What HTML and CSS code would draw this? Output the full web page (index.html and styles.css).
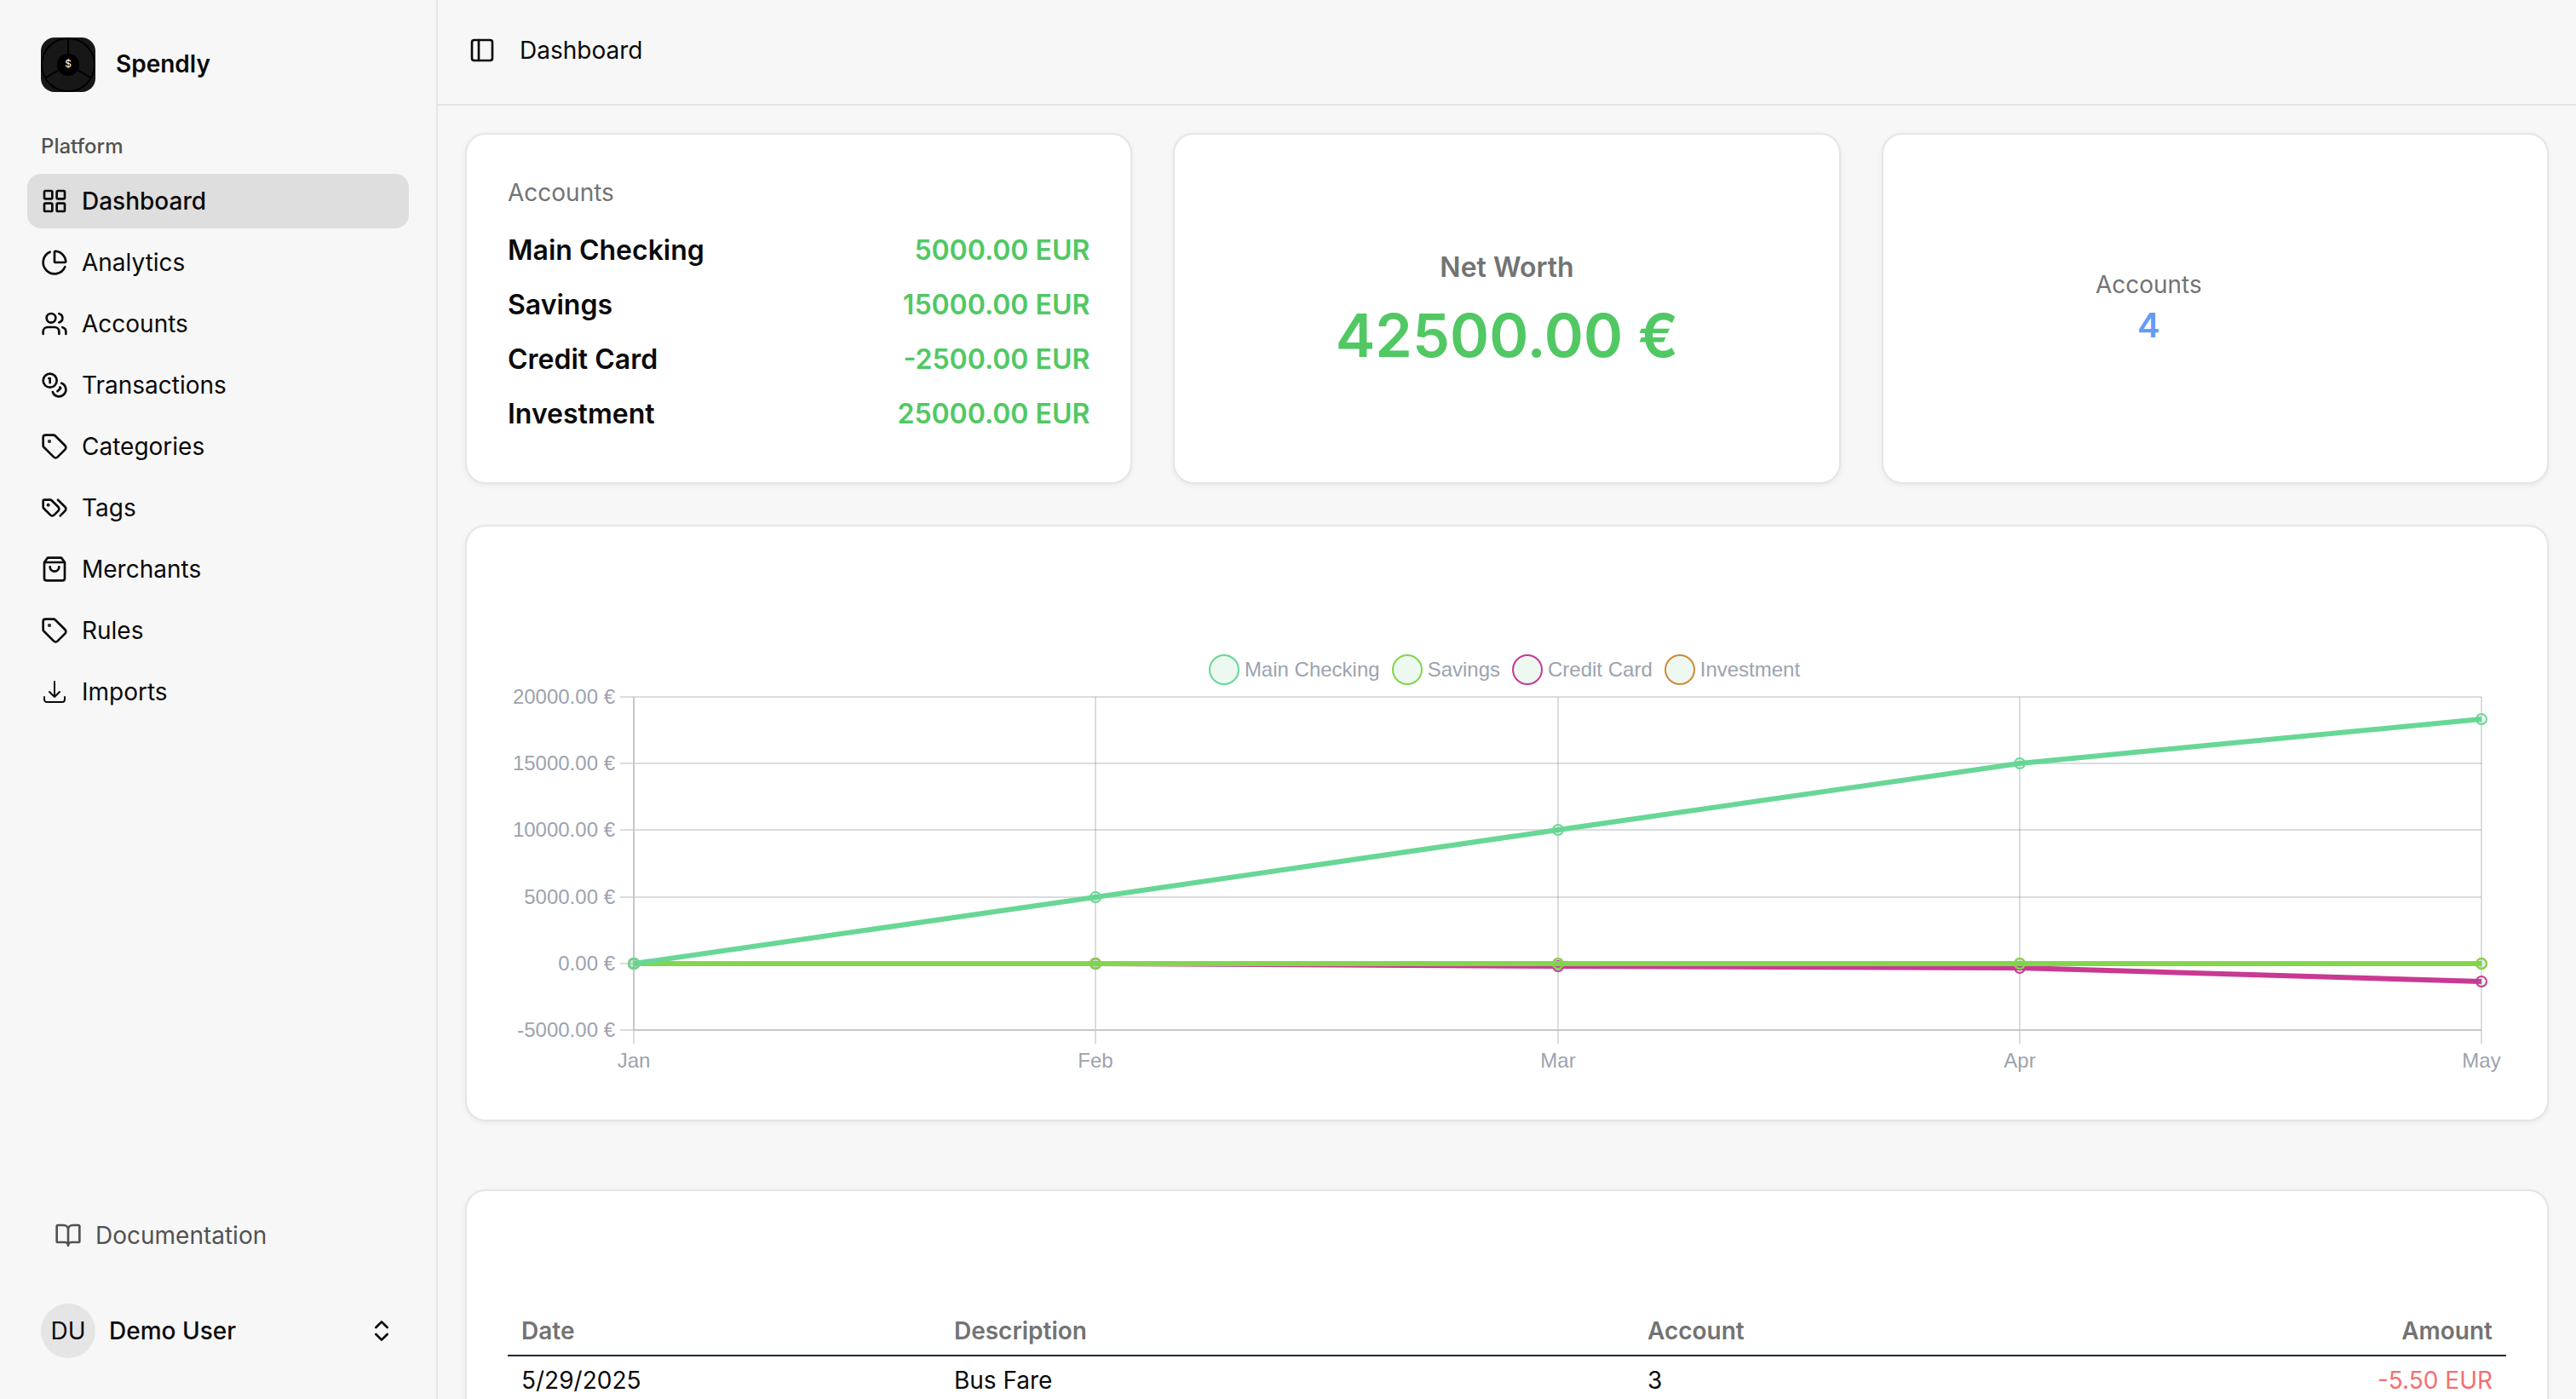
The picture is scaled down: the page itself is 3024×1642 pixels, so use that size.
FILE: index.html
```html
<!DOCTYPE html>
<html lang="en">
<head>
<meta charset="utf-8">
<title>Dashboard - Spendly</title>
<link rel="stylesheet" href="styles.css">
</head>
<body>
<div class="app">
  <aside class="sidebar">
    <a class="brand" href="#">
      <svg class="brand-logo" viewBox="0 0 64 64" aria-hidden="true">
        <rect width="64" height="64" rx="16" fill="#171717"/>
        <g fill="none" stroke="#000" stroke-width="2">
          <circle cx="32" cy="32" r="31"/>
          <path d="M32 1v20M6 47l17-10M58 47L41 37"/>
        </g>
        <circle cx="32" cy="32" r="13" fill="#000"/>
        <text x="32" y="35" text-anchor="middle" font-size="12" fill="#fff">$</text>
      </svg>
      <span class="brand-name">Spendly</span>
    </a>
    <nav class="nav" aria-label="Platform">
      <p class="nav-label">Platform</p>
      <ul class="nav-list">
        <li><a class="nav-item active" href="#" aria-current="page"><svg class="icon" viewBox="0 0 24 24"><rect width="7" height="7" x="3" y="3" rx="1"/><rect width="7" height="7" x="14" y="3" rx="1"/><rect width="7" height="7" x="14" y="14" rx="1"/><rect width="7" height="7" x="3" y="14" rx="1"/></svg>Dashboard</a></li>
        <li><a class="nav-item" href="#"><svg class="icon" viewBox="0 0 24 24"><path d="M21 12c.552 0 1.005-.449.95-.998a10 10 0 0 0-8.953-8.951c-.55-.055-.998.398-.998.95v8a1 1 0 0 0 1 1z"/><path d="M21.21 15.89A10 10 0 1 1 8 2.83"/></svg>Analytics</a></li>
        <li><a class="nav-item" href="#"><svg class="icon" viewBox="0 0 24 24"><path d="M16 21v-2a4 4 0 0 0-4-4H6a4 4 0 0 0-4 4v2"/><circle cx="9" cy="7" r="4"/><path d="M22 21v-2a4 4 0 0 0-3-3.870M16 3.130a4 4 0 0 1 0 7.750"/></svg>Accounts</a></li>
        <li><a class="nav-item" href="#"><svg class="icon" viewBox="0 0 24 24"><circle cx="8" cy="8" r="6"/><path d="M18.090 10.370A6 6 0 1 1 10.340 18M7 6h1v4M16.710 13.880l.7.710-2.820 2.820"/></svg>Transactions</a></li>
        <li><a class="nav-item" href="#"><svg class="icon" viewBox="0 0 24 24"><path d="M12.586 2.586A2 2 0 0 0 11.172 2H4a2 2 0 0 0-2 2v7.172a2 2 0 0 0 .586 1.414l8.704 8.704a2.426 2.426 0 0 0 3.420 0l6.580-6.580a2.426 2.426 0 0 0 0-3.420z"/><circle cx="7.500" cy="7.500" r=".5" fill="currentColor"/></svg>Categories</a></li>
        <li><a class="nav-item" href="#"><svg class="icon" viewBox="0 0 24 24"><path d="m15 5 6.300 6.300a2.400 2.400 0 0 1 0 3.400L17 19"/><path d="M9.586 5.586A2 2 0 0 0 8.172 5H3a1 1 0 0 0-1 1v5.172a2 2 0 0 0 .586 1.414L8.290 18.290a2.426 2.426 0 0 0 3.420 0l3.580-3.580a2.426 2.426 0 0 0 0-3.420z"/><circle cx="6.500" cy="9.500" r=".5" fill="currentColor"/></svg>Tags</a></li>
        <li><a class="nav-item" href="#"><svg class="icon" viewBox="0 0 24 24"><path d="M6 2 3 6v14a2 2 0 0 0 2 2h14a2 2 0 0 0 2-2V6l-3-4ZM3 6h18M16 10a4 4 0 0 1-8 0"/></svg>Merchants</a></li>
        <li><a class="nav-item" href="#"><svg class="icon" viewBox="0 0 24 24"><path d="M12.586 2.586A2 2 0 0 0 11.172 2H4a2 2 0 0 0-2 2v7.172a2 2 0 0 0 .586 1.414l8.704 8.704a2.426 2.426 0 0 0 3.420 0l6.580-6.580a2.426 2.426 0 0 0 0-3.420z"/><circle cx="7.500" cy="7.500" r=".5" fill="currentColor"/></svg>Rules</a></li>
        <li><a class="nav-item" href="#"><svg class="icon thin" viewBox="0 0 24 24"><path d="M3 16.500v2.250A2.250 2.250 0 0 0 5.250 21h13.500A2.250 2.250 0 0 0 21 18.750V16.500M16.500 12 12 16.500m0 0L7.500 12m4.500 4.500V3"/></svg>Imports</a></li>
      </ul>
    </nav>
    <a class="nav-item docs" href="#"><svg class="icon" viewBox="0 0 24 24"><path d="M12 7v14M3 18a1 1 0 0 1-1-1V4a1 1 0 0 1 1-1h5a4 4 0 0 1 4 4 4 4 0 0 1 4-4h5a1 1 0 0 1 1 1v13a1 1 0 0 1-1 1h-6a3 3 0 0 0-3 3 3 3 0 0 0-3-3z"/></svg>Documentation</a>
    <button class="user" type="button">
      <span class="avatar">DU</span>
      <span class="user-name">Demo User</span>
      <svg class="icon" viewBox="0 0 24 24"><path d="m7 15 5 5 5-5M7 9l5-5 5 5"/></svg>
    </button>
  </aside>

  <div class="page">
    <header class="topbar">
      <button class="toggle" type="button" aria-label="Toggle sidebar"><svg class="icon" viewBox="0 0 24 24"><rect width="18" height="18" x="3" y="3" rx="2"/><path d="M9 3v18"/></svg></button>
      <h1 class="title">Dashboard</h1>
    </header>
    <main class="content">
      <div class="stats">
        <section class="card">
          <h2 class="muted">Accounts</h2>
          <dl class="accounts">
            <div class="account"><dt>Main Checking</dt><dd>5000.00 EUR</dd></div>
            <div class="account"><dt>Savings</dt><dd>15000.00 EUR</dd></div>
            <div class="account"><dt>Credit Card</dt><dd>-2500.00 EUR</dd></div>
            <div class="account"><dt>Investment</dt><dd>25000.00 EUR</dd></div>
          </dl>
        </section>
        <section class="card worth">
          <h2 class="worth-label">Net Worth</h2>
          <p class="worth-value">42500.00 €</p>
        </section>
        <section class="card count">
          <h2 class="muted">Accounts</h2>
          <p class="count-value">4</p>
        </section>
      </div>

      <section class="card chart-card" aria-label="Balance by account">
        <ul class="legend">
          <li class="legend-item"><span class="dot main"></span>Main Checking</li>
          <li class="legend-item"><span class="dot savings"></span>Savings</li>
          <li class="legend-item"><span class="dot credit"></span>Credit Card</li>
          <li class="legend-item"><span class="dot invest"></span>Investment</li>
        </ul>
        <svg class="chart" viewBox="0 0 2346 462" role="img" aria-label="Balances from January to May">
          <g class="grid">
            <path d="M132 14H2317M132 92H2317M132 170H2317M132 249H2317M132 327H2317M132 405H148"/>
            <path d="M148 405V421M690 14V421M1233 14V421M1775 14V421M2317 14V421"/>
          </g>
          <path class="axis" d="M148 14V405H2317"/>
          <g class="y-labels">
            <text x="126" y="22">20000.00 €</text>
            <text x="126" y="100">15000.00 €</text>
            <text x="126" y="178">10000.00 €</text>
            <text x="126" y="257">5000.00 €</text>
            <text x="126" y="335">0.00 €</text>
            <text x="126" y="413">-5000.00 €</text>
          </g>
          <g class="x-labels">
            <text x="148" y="449">Jan</text>
            <text x="690" y="449">Feb</text>
            <text x="1233" y="449">Mar</text>
            <text x="1775" y="449">Apr</text>
            <text x="2317" y="449">May</text>
          </g>
          <g class="series invest">
            <path d="M148 327H2317"/>
            <circle cx="148" cy="327" r="6"/><circle cx="690" cy="327" r="6"/><circle cx="1233" cy="327" r="6"/><circle cx="1775" cy="327" r="6"/><circle cx="2317" cy="327" r="6"/>
          </g>
          <g class="series credit">
            <path d="M148 327H690L1233 330L1775 332L2317 348"/>
            <circle cx="148" cy="327" r="6"/><circle cx="690" cy="327" r="6"/><circle cx="1233" cy="330" r="6"/><circle cx="1775" cy="332" r="6"/><circle cx="2317" cy="348" r="6"/>
          </g>
          <g class="series savings">
            <path d="M148 327H2317"/>
            <circle cx="148" cy="327" r="6"/><circle cx="690" cy="327" r="6"/><circle cx="1233" cy="327" r="6"/><circle cx="1775" cy="327" r="6"/><circle cx="2317" cy="327" r="6"/>
          </g>
          <g class="series main">
            <path d="M148 327L690 249L1233 170L1775 92L2317 40"/>
            <circle cx="148" cy="327" r="6"/><circle cx="690" cy="249" r="6"/><circle cx="1233" cy="170" r="6"/><circle cx="1775" cy="92" r="6"/><circle cx="2317" cy="40" r="6"/>
          </g>
        </svg>
      </section>

      <section class="card table-card" aria-label="Recent transactions">
        <table class="table">
          <colgroup><col class="col-date"><col class="col-desc"><col class="col-account"><col></colgroup>
          <thead>
            <tr><th scope="col">Date</th><th scope="col">Description</th><th scope="col">Account</th><th scope="col" class="num">Amount</th></tr>
          </thead>
          <tbody>
            <tr><td>5/29/2025</td><td>Bus Fare</td><td>3</td><td class="num negative">-5.50 EUR</td></tr>
          </tbody>
        </table>
      </section>
    </main>
  </div>
</div>
</body>
</html>
```
FILE: styles.css
```css
* { box-sizing: border-box; }

body {
  margin: 0;
  background: #f7f7f7;
  color: #0a0a0a;
  font-family: Inter, "Liberation Sans", sans-serif;
  font-size: 28px;
  line-height: 40px;
}

h1, h2, p, ul, dl, dd { margin: 0; padding: 0; font: inherit; }
ul { list-style: none; }
a { color: inherit; text-decoration: none; }
button { margin: 0; padding: 0; border: 0; background: none; color: inherit; font: inherit; text-align: left; }

.icon {
  flex: none;
  display: block;
  width: 32px;
  height: 32px;
  fill: none;
  stroke: currentColor;
  stroke-width: 2;
  stroke-linecap: round;
  stroke-linejoin: round;
}
.icon.thin { stroke-width: 1.5; }

.app { display: flex; height: 100vh; overflow: hidden; }

.sidebar {
  flex: none;
  display: flex;
  flex-direction: column;
  width: 514px;
  padding: 28px 32px 32px;
  border-right: 2px solid #e5e5e5;
}
.brand { display: flex; align-items: center; gap: 24px; padding: 16px; }
.brand-logo { width: 64px; height: 64px; }
.brand-name { padding-bottom: 2px; font-weight: 600; }
.nav { flex: 1; padding-top: 16px; }
.nav-label { padding: 12px 16px; color: #525252; font-size: 24px; font-weight: 500; }
.nav-list { display: grid; gap: 8px; }
.nav-item { display: flex; align-items: center; gap: 16px; padding: 12px 16px; border-radius: 16px; }
.nav-item.active { background: #dedede; font-weight: 500; }
.docs { margin: 0 16px 32px; color: #525252; }
.user { display: flex; align-items: center; gap: 16px; width: 100%; padding: 16px; }
.avatar {
  display: grid;
  place-items: center;
  width: 64px;
  height: 64px;
  border-radius: 50%;
  background: #e5e5e5;
}
.user-name { flex: 1; font-weight: 500; }

.page { flex: 1; min-width: 0; }
.topbar {
  display: flex;
  align-items: center;
  gap: 28px;
  height: 124px;
  padding: 0 36px 4px;
  border-bottom: 2px solid #e5e5e5;
}
.content { padding: 32px; }

.card {
  padding: 48px;
  border: 2px solid #e5e5e5;
  border-radius: 24px;
  background: #fff;
  box-shadow: 0 2px 6px rgb(0 0 0 / 6%);
}
.muted { color: #737373; }

.stats { display: grid; grid-template-columns: repeat(3, 1fr); gap: 48px; margin-bottom: 48px; }
.accounts { padding-top: 16px; font-size: 32px; font-weight: 600; line-height: 48px; }
.account { display: flex; justify-content: space-between; padding: 8px 0; }
.account dd { color: #51c863; }
.worth, .count { display: flex; flex-direction: column; align-items: center; justify-content: center; }
.worth { gap: 16px; }
.worth-label { color: #737373; font-size: 32px; font-weight: 600; line-height: 48px; }
.worth-value { color: #51c863; font-size: 70px; font-weight: 600; line-height: 80px; }
.count { padding-right: 204px; }
.count-value { color: #629bf8; font-size: 40px; font-weight: 600; line-height: 56px; }

.chart-card { margin-bottom: 80px; padding-top: 150px; color: #9ca3af; font-family: "Liberation Sans", Arial, sans-serif; font-size: 24px; line-height: 36px; }
.legend { display: flex; justify-content: center; gap: 14px; padding-right: 6px; }
.legend-item { display: flex; gap: 6px; }
.dot { width: 36px; height: 36px; border: 2px solid; border-radius: 50%; background: #edf8f1; }
.dot.main { border-color: #68d796; }
.dot.savings { border-color: #83d64b; }
.dot.credit { border-color: #c93993; }
.dot.invest { border-color: #d08a37; }

.chart { display: block; width: 100%; font-size: 24px; }
.chart text { fill: #9ca3af; }
.y-labels { text-anchor: end; }
.x-labels { text-anchor: middle; }
.grid { fill: none; stroke: #6b7280; stroke-opacity: 0.25; stroke-width: 2; }
.axis { fill: none; stroke: #c6c7cb; stroke-width: 2; }
.series path { fill: none; stroke-width: 6; stroke-linejoin: round; }
.series circle { fill: #4bc0731a; stroke-width: 2; }
.series.main { stroke: #68d796; }
.series.savings { stroke: #83d64b; }
.series.credit { stroke: #c93993; }
.series.invest { stroke: #d08a37; }

.table-card { padding-top: 136px; }
.table { width: 100%; border-collapse: separate; border-spacing: 0; table-layout: fixed; }
.col-date { width: 21.65%; }
.col-desc { width: 34.7%; }
.col-account { width: 22%; }
.table th, .table td { padding: 8px 16px; text-align: left; }
.table th { border-bottom: 2px solid #1e2939; color: #737373; font-weight: 600; }
.table .num { text-align: right; }
.table .negative { color: #f2706f; }
```
